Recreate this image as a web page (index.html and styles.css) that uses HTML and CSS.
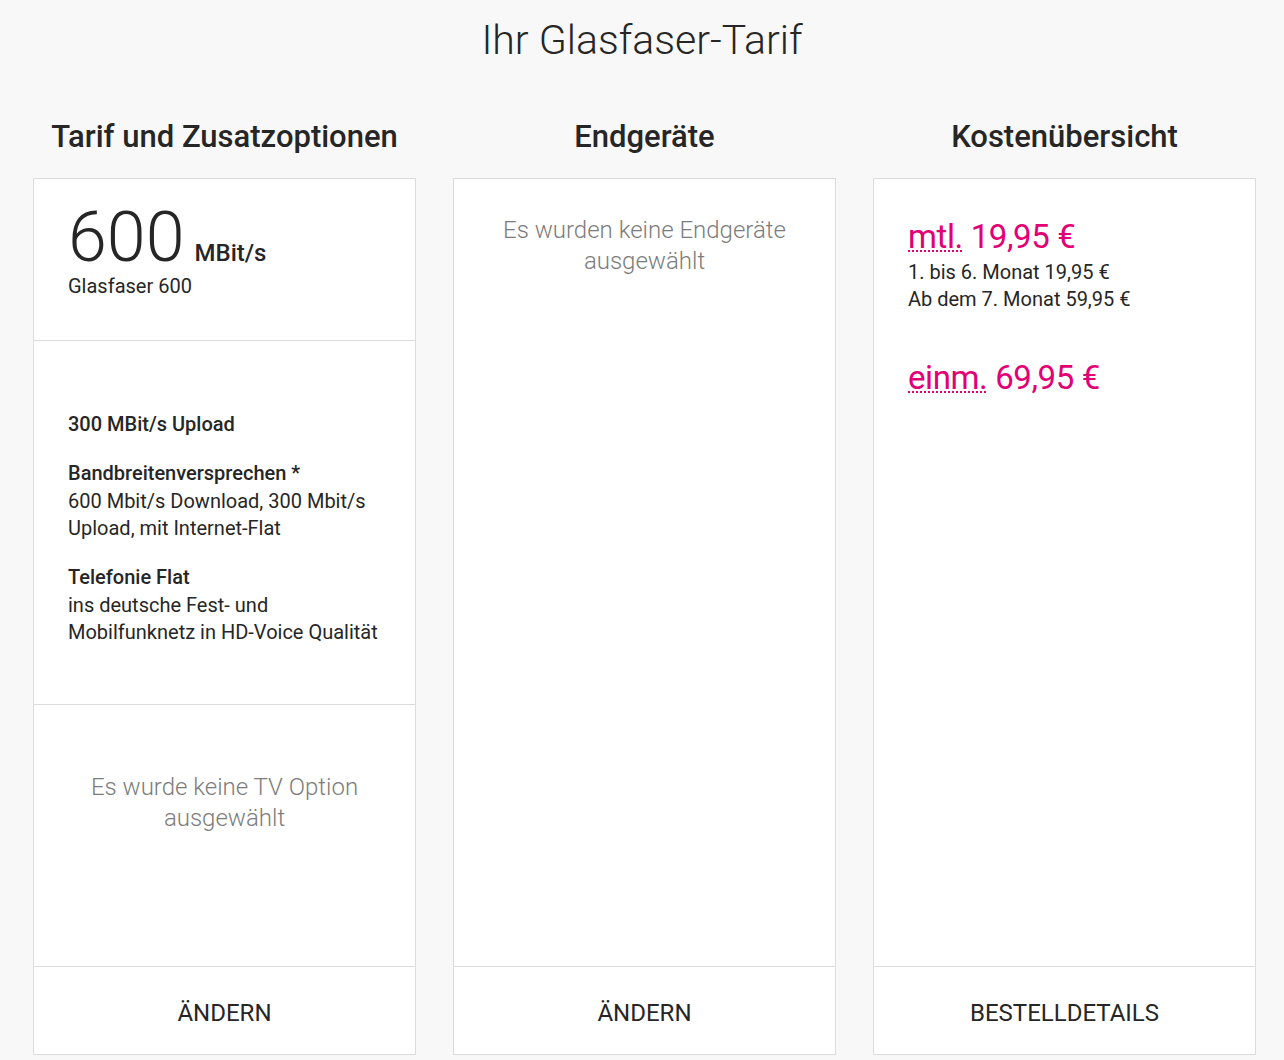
FILE: index.html
```html
<!DOCTYPE html>
<html lang="de">
<head>
<meta charset="utf-8">
<title>Ihr Glasfaser-Tarif</title>
<link rel="stylesheet" href="styles.css">
</head>
<body>
<h1 class="page-title">Ihr Glasfaser-Tarif</h1>
<div class="columns">
  <section class="col">
    <h2 class="col-title">Tarif und Zusatzoptionen</h2>
    <div class="card">
      <div class="sec sec-speed">
        <div class="speed"><span class="speed-num">600</span><span class="speed-unit">MBit/s</span></div>
        <div class="speed-name">Glasfaser 600</div>
      </div>
      <div class="sec sec-features">
        <p class="feat"><b>300 MBit/s Upload</b></p>
        <p class="feat"><b>Bandbreitenversprechen *</b><br>600 Mbit/s Download, 300 Mbit/s Upload, mit Internet-Flat</p>
        <p class="feat"><b>Telefonie Flat</b><br>ins deutsche Fest- und Mobilfunknetz in HD-Voice Qualität</p>
      </div>
      <div class="sec sec-tv">
        <p class="empty">Es wurde keine TV Option ausgewählt</p>
      </div>
      <div class="card-foot">ÄNDERN</div>
    </div>
  </section>
  <section class="col">
    <h2 class="col-title">Endgeräte</h2>
    <div class="card">
      <div class="sec sec-fill sec-devices">
        <p class="empty">Es wurden keine Endgeräte ausgewählt</p>
      </div>
      <div class="card-foot">ÄNDERN</div>
    </div>
  </section>
  <section class="col">
    <h2 class="col-title">Kostenübersicht</h2>
    <div class="card">
      <div class="sec sec-fill sec-costs">
        <div class="price"><abbr class="pl">mtl.</abbr> 19,95 €</div>
        <div class="price-note">1. bis 6. Monat 19,95 €<br>Ab dem 7. Monat 59,95 €</div>
        <div class="price price-once"><abbr class="pl">einm.</abbr> 69,95 €</div>
      </div>
      <div class="card-foot">BESTELLDETAILS</div>
    </div>
  </section>
</div>
</body>
</html>
```
FILE: styles.css
```css
* { box-sizing: border-box; }
html, body { margin: 0; padding: 0; }
body {
  background: #f8f8f8;
  font-family: Roboto, "Noto Sans", "Liberation Sans", sans-serif;
  color: #262626;
}
.page-title {
  margin: 0;
  padding-top: 15px;
  height: 90px;
  text-align: center;
  font-size: 41px;
  line-height: 50px;
  font-weight: 300;
  color: #262626;
}
.columns {
  display: grid;
  grid-template-columns: repeat(3, 383px);
  column-gap: 37px;
  padding-left: 33px;
}
.col { display: flex; flex-direction: column; }
.col-title {
  margin: 0;
  height: 88px;
  padding-top: 27px;
  text-align: center;
  font-size: 31px;
  line-height: 40px;
  font-weight: 500;
  color: #262626;
}
.card {
  height: 877px;
  background: #fff;
  border: 1px solid #dcdcdc;
  display: flex;
  flex-direction: column;
}
.sec { padding: 0 34px; }
.sec-speed { height: 162px; padding-top: 24px; border-bottom: 1px solid #dcdcdc; }
.speed { display: flex; align-items: baseline; height: 68px; }
.speed-num { font-size: 70px; line-height: 68px; font-weight: 300; }
.speed-unit { font-size: 24px; line-height: 28px; font-weight: 500; margin-left: 10px; }
.speed-name { font-size: 20px; line-height: 24px; margin-top: 3px; }
.sec-features { height: 364px; padding-top: 70px; border-bottom: 1px solid #dcdcdc; }
.feat { margin: 0 0 21.5px; font-size: 20px; line-height: 27.5px; }
.feat b { font-weight: 500; }
.sec-tv { flex: 1; padding-top: 67px; }
.empty {
  margin: 0;
  text-align: center;
  color: #7c7c7c;
  font-size: 24px;
  line-height: 31px;
  font-weight: 300;
}
.sec-fill { flex: 1; }
.sec-devices { padding-top: 36px; }
.sec-costs { padding-top: 38px; }
.price { color: #e20074; font-size: 33px; line-height: 40px; letter-spacing: -0.4px; }
.pl {
  text-decoration: underline dotted #e20074;
  text-decoration-thickness: 2px;
  text-underline-offset: 2px;
}
.price-note { font-size: 20px; line-height: 27px; margin-top: 2px; }
.price-once { margin-top: 45px; }
.card-foot {
  height: 88px;
  border-top: 1px solid #dcdcdc;
  display: flex;
  align-items: center;
  justify-content: center;
  padding-top: 5px;
  font-size: 24px;
  color: #262626;
}
```
